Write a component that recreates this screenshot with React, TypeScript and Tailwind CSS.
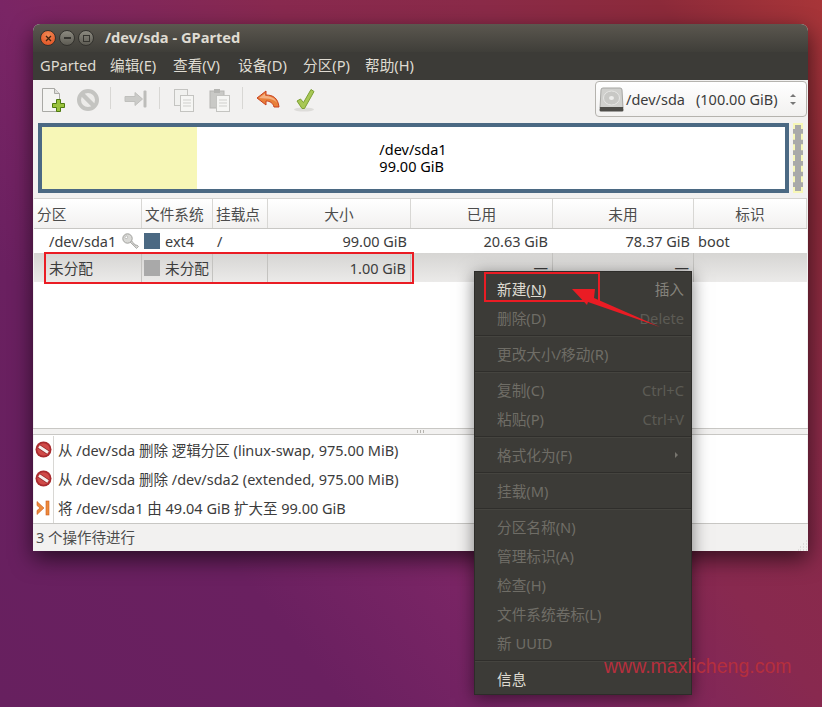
import { ReactNode } from 'react';

const copyItems = ['复制(C)', '粘贴(P)'];

function Sep() {
  return <div className="mb-[2px] mt-[3px] h-[2px] border-t border-b border-t-[#2f2e2b] border-b-[#45443f]" />;
}

function MenuItem({ label, hint, on, arrow }: { label: ReactNode; hint?: string; on?: boolean; arrow?: boolean }) {
  return (
    <div className={`flex h-[29px] items-center justify-between pl-[22px] pr-[7px] pt-px text-[14.67px] ${on ? 'text-[#dfdbd2]' : 'text-[#6f6d66]'}`}>
      <span>{label}</span>
      {hint && <span className={hint === '插入' ? 'text-[#85837c]' : 'text-[#5c5b55]'}>{hint}</span>}
      {arrow && <span className="mr-[6px] h-0 w-0 border-y-[3px] border-l-[3px] border-y-transparent border-l-[#77756e]" />}
    </div>
  );
}

function NewIcon() {
  return (
    <svg width="24" height="26" viewBox="0 0 24 26">
      <path d="M1.500 1.500h12l5 5v18h-17z" fill="#f4f4f2" stroke="#a9a9a5" />
      <path d="M13.500 1.500v5h5" fill="#dededb" stroke="#a9a9a5" />
      <path d="M11.500 16.500h4v-4h4v4h4v4h-4v4h-4v-4h-4z" fill="#9ac23c" stroke="#4e7a10" />
    </svg>
  );
}

function GreyNoIcon() {
  return (
    <svg width="24" height="24" viewBox="0 0 24 24">
      <circle cx="12" cy="12" r="9" fill="#ecebe9" stroke="#c4c4c1" strokeWidth="4" />
      <path d="M6 6l12 12" stroke="#c4c4c1" strokeWidth="4.500" />
    </svg>
  );
}

function NoIcon() {
  return (
    <svg width="17" height="17" viewBox="0 0 17 17">
      <circle cx="8.500" cy="8.500" r="8" fill="#a92a2e" />
      <circle cx="8.500" cy="8.500" r="6.200" fill="#cf4a48" />
      <path d="M4 5.500l9 6" stroke="#8c1f22" strokeWidth="4.500" />
      <path d="M4 5.500l9 6" stroke="#f7efed" strokeWidth="3" />
    </svg>
  );
}

function ResizeIcon() {
  return (
    <svg width="23" height="20" viewBox="0 0 23 20">
      <path d="M1 7.500h10V3.500l7.500 6.500-7.500 6.500v-4H1z" fill="#cbcbc8" stroke="#c0c0bd" strokeLinejoin="round" />
      <rect x="19.500" y="1.500" width="3" height="17" rx="1" fill="#bdbdba" />
    </svg>
  );
}

function DocsIcon({ clip }: { clip?: boolean }) {
  return (
    <svg width="21" height="24" viewBox="0 0 21 24">
      {clip ? (
        <>
          <rect x="1" y="3" width="14" height="17" fill="#c9c9c6" stroke="#b5b5b2" />
          <rect x="5" y="1" width="6" height="4" fill="#b5b5b2" />
        </>
      ) : (
        <rect x="1.500" y="1.500" width="13" height="16" fill="#f1f1ef" stroke="#c4c4c1" />
      )}
      <rect x="7.500" y="7.500" width="13" height="16" fill="#f6f6f4" stroke="#c4c4c1" />
      <path d="M10 12h8M10 15h8M10 18h8" stroke="#cfcfcc" />
    </svg>
  );
}

function UndoIcon() {
  return (
    <svg width="24" height="20" viewBox="0 0 24 20">
      <path d="M1 8 10 1v4c7 0 12 3 13 12h-5c-1-4-4-6-8-6v4z" fill="#e8803a" stroke="#c9401e" strokeLinejoin="round" />
      <path d="M3 8l6-4.500V6c6 0 10 2 12 7-2-3-6-4.500-12-4.500z" fill="#f4b183" />
    </svg>
  );
}

function CheckIcon() {
  return (
    <svg width="22" height="24" viewBox="0 0 22 24">
      <ellipse cx="10" cy="21.500" rx="10" ry="2" fill="#dddcd9" />
      <path d="M3 13l3.500-2 3 3.500 7.500-13 3 2-9.500 17H8z" fill="#a8c855" stroke="#7c9f33" strokeLinejoin="round" />
    </svg>
  );
}

function DiskIcon() {
  return (
    <svg width="25" height="25" viewBox="0 0 25 25">
      <path d="M4 1h17a2 2 0 0 1 2 2l1 18H1L2 3a2 2 0 0 1 2-2z" fill="#d0d0cd" stroke="#a6a6a3" />
      <ellipse cx="12.500" cy="11" rx="8" ry="7" fill="#c8c8c5" stroke="#e6e6e4" />
      <ellipse cx="12.500" cy="11" rx="2.500" ry="2" fill="#eeeeec" />
      <path d="M1 20h23l.5 3a1.500 1.500 0 0 1-1.500 1.500H2A1.500 1.500 0 0 1 .5 23z" fill="#4d4c48" />
    </svg>
  );
}

function KeyIcon() {
  return (
    <svg width="17" height="17" viewBox="0 0 17 17">
      <path d="M7 8 L14.500 15.500 L16.500 13.500 L15 12 L13.500 12.500 L13 11 L11.500 11 L11 9.500 L9 7z" fill="#d4d4d1" stroke="#a0a09d" strokeWidth="0.800" strokeLinejoin="round" />
      <circle cx="5.500" cy="5.500" r="4.700" fill="#d9d9d6" stroke="#a0a09d" />
      <circle cx="4.300" cy="4.300" r="1.300" fill="#ffffff" stroke="#a0a09d" strokeWidth="0.600" />
    </svg>
  );
}

function ApplyStep() {
  return (
    <svg width="14" height="16" viewBox="0 0 14 16">
      <path d="M1 1.500l7 6.500-7 6.500v-4l3-2.500-3-2.500z" fill="#ec8a3c" stroke="#cf5a1c" strokeWidth="0.600" />
      <rect x="10" y="1" width="3" height="14" fill="#ec8a3c" stroke="#cf5a1c" strokeWidth="0.600" />
    </svg>
  );
}

function WinBtn({ color, mark }: { color: string; mark: ReactNode }) {
  return (
    <span className={`flex h-[16px] w-[16px] items-center justify-center rounded-full border border-[#33322e] text-[#2c2a26] ${color}`}>
      {mark}
    </span>
  );
}

function HeaderCell({ children, left }: { children: string; left?: boolean }) {
  return (
    <div className={`flex items-center border-r border-[#d8d7d4] pt-[2px] ${left ? 'pl-[3px]' : 'justify-center'}`}>{children}</div>
  );
}

export default function App() {
  const rowCols = 'grid grid-cols-[108px_71px_55px_143px_142px_141px_1fr]';
  return (
    <div className="relative h-[707px] w-[822px] overflow-hidden bg-[linear-gradient(52deg,#67205f_0%,#6a2060_25%,#7a2565_40%,#88294f_60%,#8a2a48_75%,#8c2a3a_88%,#a83538_100%)] font-['Noto_Sans','Noto_Sans_CJK_SC',sans-serif] text-[14.5px] leading-none text-[#3c3c3c]">
      {/* GParted window */}
      <div className="absolute left-[33px] top-[24px] flex h-[527px] w-[775px] flex-col overflow-hidden rounded-t-[7px] bg-[#f2f1f0] shadow-[0_8px_22px_rgba(0,0,0,0.6)]">
        <div className="flex h-[28px] shrink-0 items-center bg-[linear-gradient(#5b574f,#3f3e39)] pl-[7px] text-[#dfdbd2]">
          <div className="flex gap-[3px]">
            <WinBtn
              color="bg-[radial-gradient(circle_at_50%_30%,#f08a55,#df4a1c)]"
              mark={<svg width="7" height="7" viewBox="0 0 7 7"><path d="M1 1l5 5M6 1l-5 5" stroke="#40230f" strokeWidth="1.300" /></svg>}
            />
            <WinBtn
              color="bg-[linear-gradient(#8c8a80,#5d5b53)]"
              mark={<span className="h-[2px] w-[7px] bg-[#35342f]" />}
            />
            <WinBtn
              color="bg-[linear-gradient(#8c8a80,#5d5b53)]"
              mark={<span className="h-[7px] w-[7px] border border-[#35342f]" />}
            />
          </div>
          <span className="mb-px ml-[11px] text-[14.67px] font-bold">/dev/sda - GParted</span>
        </div>

        <div className="flex h-[28px] shrink-0 items-center bg-[#3c3b37] pb-[2px] pl-[7px] text-[14.67px] text-[#dfdbd2]">
          <span className="w-[70px]">GParted</span>
          <span className="w-[63px]">编辑(E)</span>
          <span className="w-[65px]">查看(V)</span>
          <span className="w-[65px]">设备(D)</span>
          <span className="w-[62px]">分区(P)</span>
          <span>帮助(H)</span>
        </div>

        <div className="flex h-[43px] shrink-0 items-start pl-[8px] pt-[1px]">
          <div className="mt-[6px] flex w-[35px]"><NewIcon /></div>
          <div className="mt-[7px] flex w-[34px]"><GreyNoIcon /></div>
          <div className="mt-[6px] h-[22px] w-px bg-[#d8d7d4]" />
          <div className="ml-[13px] mt-[8px] flex w-[35px]"><ResizeIcon /></div>
          <div className="mt-[6px] h-[22px] w-px bg-[#d8d7d4]" />
          <div className="ml-[13px] mt-[7px] flex w-[36px]"><DocsIcon /></div>
          <div className="mt-[7px] flex w-[33px]"><DocsIcon clip /></div>
          <div className="mt-[6px] h-[22px] w-px bg-[#d8d7d4]" />
          <div className="ml-[13px] mt-[9px] flex w-[38px]"><UndoIcon /></div>
          <div className="mt-[7px] flex w-[22px]"><CheckIcon /></div>
          <div className="ml-auto mr-px flex h-[36px] w-[212px] items-center rounded-[4px] border border-[#b5b3ae] bg-[linear-gradient(#ffffff,#f2f1f0)] pl-[3px]">
            <DiskIcon />
            <span className="ml-[2px] whitespace-pre">/dev/sda</span>
            <span className="ml-[11px] whitespace-pre">(100.00 GiB)</span>
            <span className="ml-auto mr-[10px] flex flex-col gap-[5px]">
              <span className="h-0 w-0 border-x-[3.500px] border-b-[3px] border-x-transparent border-b-[#777]" />
              <span className="h-0 w-0 border-x-[3.500px] border-t-[3px] border-x-transparent border-t-[#777]" />
            </span>
          </div>
        </div>

        <div className="flex h-[70px] shrink-0 items-stretch pl-[5px] pr-[5px] text-black">
          <div className="flex w-[751px] border-[4px] border-[#4b6983] bg-white">
            <div className="w-[155px] bg-[#f7f7b7]" />
            <div className="flex flex-1 items-center justify-center pr-[156px]">
              <div className="leading-[17px]">
                /dev/sda1
                <br />
                99.00 GiB
              </div>
            </div>
          </div>
          <div className="ml-[4px] w-[10px] border-[2px] border-dashed border-[#f7f7b7] bg-[#a9a9a9]" />
        </div>

        <div className="mx-px mt-[5px] flex min-h-0 flex-1 flex-col border-t border-[#d4d3d0] bg-white">
          <div className={`${rowCols} h-[30px] shrink-0 border-b border-[#c8c7c4] bg-[linear-gradient(#ffffff,#f2f1f0)] text-[14.67px] text-[#4c4c4c]`}>
            <HeaderCell left>分区</HeaderCell>
            <HeaderCell left>文件系统</HeaderCell>
            <HeaderCell left>挂载点</HeaderCell>
            <HeaderCell>大小</HeaderCell>
            <HeaderCell>已用</HeaderCell>
            <HeaderCell>未用</HeaderCell>
            <HeaderCell>标识</HeaderCell>
          </div>
          <div className={`${rowCols} h-[24px] shrink-0 items-center`}>
            <div className="flex items-center pl-[15px]">
              /dev/sda1
              <span className="ml-[6px]"><KeyIcon /></span>
            </div>
            <div className="flex items-center pl-[2px]">
              <span className="mr-[5px] h-[16px] w-[16px] bg-[#4b6983]" />
              ext4
            </div>
            <div className="pl-[4px]">/</div>
            <div className="pr-[4px] text-right">99.00 GiB</div>
            <div className="pr-[5px] text-right">20.63 GiB</div>
            <div className="pr-[4px] text-right">78.37 GiB</div>
            <div className="pl-[4px]">boot</div>
          </div>
          <div className={`${rowCols} h-[29px] shrink-0 bg-[linear-gradient(#d6d5d3,#ebeae9)]`}>
            <div className="flex items-center border-r border-[#c4c3c0] pl-[15px] pt-px text-[14.67px]">未分配</div>
            <div className="flex items-center border-r border-[#c4c3c0] pl-[2px] text-[14.67px]">
              <span className="mr-[5px] h-[16px] w-[16px] bg-[#a9a9a9]" />
              <span className="pt-px">未分配</span>
            </div>
            <div className="border-r border-[#c4c3c0]" />
            <div className="flex items-center justify-end border-r border-[#c4c3c0] pr-[4px] pt-px">1.00 GiB</div>
            <div className="flex items-center justify-end border-r border-[#c4c3c0] pr-[4px]">—</div>
            <div className="flex items-center justify-end border-r border-[#c4c3c0] pr-[4px]">—</div>
            <div />
          </div>
          <div className="flex-1" />
        </div>

        <div className="relative h-[7px] shrink-0 border-y border-[#c8c7c4] bg-[#f2f1f0]">
          <div className="absolute left-[384px] top-px flex gap-[2px]">
            <span className="h-[3px] w-px bg-[#b5b3ae]" />
            <span className="h-[3px] w-px bg-[#b5b3ae]" />
            <span className="h-[3px] w-px bg-[#b5b3ae]" />
          </div>
        </div>

        <div className="mx-px flex h-[88px] shrink-0 flex-col bg-white pt-[1px]">
          {[
            { icon: <NoIcon />, text: '从 /dev/sda 删除 逻辑分区 (linux-swap, 975.00 MiB)' },
            { icon: <NoIcon />, text: '从 /dev/sda 删除 /dev/sda2 (extended, 975.00 MiB)' },
            { icon: <ApplyStep />, text: '将 /dev/sda1 由 49.04 GiB 扩大至 99.00 GiB' },
          ].map((row) => (
            <div key={row.text} className="flex h-[29px] items-center">
              <div className="flex h-full w-[20px] items-center justify-center border-r border-[#d8d7d4] pb-[2px] pr-px">{row.icon}</div>
              <span className="ml-[4px]">{row.text}</span>
            </div>
          ))}
        </div>

        <div className="relative flex h-[28px] shrink-0 items-center border-t border-[#c8c7c4] pl-[3px] text-[#4c4c4c]">
          3 个操作待进行
          <svg className="absolute bottom-0 right-0" width="11" height="11" viewBox="0 0 11 11">
            <path d="M9 1h1M6 4h1M9 4h1M3 7h1M6 7h1M9 7h1M1 10h1M3 10h1M6 10h1M9 10h1" stroke="#c9c8c5" />
          </svg>
        </div>
      </div>

      {/* context menu */}
      <div className="absolute left-[474px] top-[271px] w-[218px] border border-[#2d2c29] bg-[#3c3b37] pb-[1px] pt-[2px] shadow-[0_3px_16px_rgba(0,0,0,0.5)]">
        <MenuItem on label={<>新建(<span className="underline">N</span>)</>} hint="插入" />
        <MenuItem label="删除(D)" hint="Delete" />
        <Sep />
        <MenuItem label="更改大小/移动(R)" />
        <Sep />
        <MenuItem label={copyItems[0]} hint="Ctrl+C" />
        <MenuItem label={copyItems[1]} hint="Ctrl+V" />
        <Sep />
        <MenuItem label="格式化为(F)" arrow />
        <Sep />
        <MenuItem label="挂载(M)" />
        <Sep />
        <MenuItem label="分区名称(N)" />
        <MenuItem label="管理标识(A)" />
        <MenuItem label="检查(H)" />
        <MenuItem label="文件系统卷标(L)" />
        <MenuItem label="新 UUID" />
        <Sep />
        <MenuItem on label="信息" />
      </div>

      {/* red annotations */}
      <div className="absolute left-[44px] top-[252px] h-[32px] w-[370px] border-2 border-[#ea1c24]" />
      <div className="absolute left-[484px] top-[272px] h-[30px] w-[116px] border-2 border-[#ea1c24]" />
      <svg className="absolute left-[565px] top-[280px]" width="100" height="50" viewBox="0 0 100 50">
        <path d="M7 9 30 9 29 18 95 47 23 22 22 25z" fill="#ea1c24" />
      </svg>
      <span className="absolute left-[604px] top-[657px] font-['Liberation_Sans',sans-serif] text-[19.500px] leading-[18px] text-[#b52f3d]">
        www.maxlicheng.com
      </span>
    </div>
  );
}
